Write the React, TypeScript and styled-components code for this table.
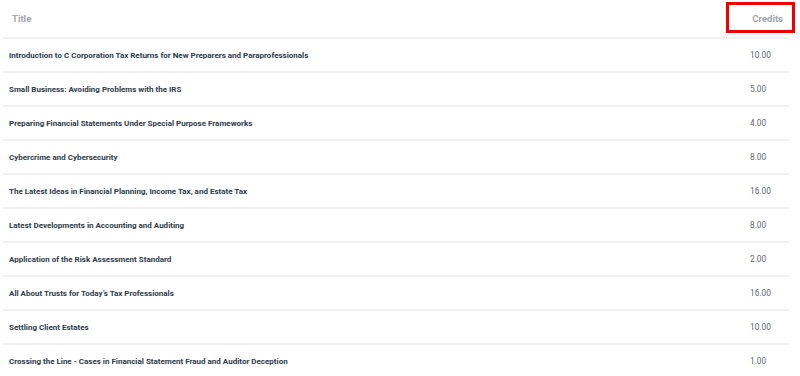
import React from "react";
import styled, { createGlobalStyle } from "styled-components";

const Global = createGlobalStyle`
  html, body { margin: 0; padding: 0; background: #fff; }
  body { font-family: Roboto, "Liberation Sans", Arial, sans-serif; }
`;

const Wrap = styled.div`
  padding: 0 11px 0 3px;
  width: 800px;
  box-sizing: border-box;
`;

const Table = styled.table`
  width: 100%;
  border-collapse: collapse;
  table-layout: fixed;
`;

const HeadCell = styled.th<{ $right?: boolean }>`
  height: 38px;
  padding: 0 6px 0 ${(p) => (p.$right ? "0" : "9px")};
  text-align: ${(p) => (p.$right ? "right" : "left")};
  font-size: 9.5px;
  font-weight: 700;
  color: #a0a4aa;
  vertical-align: middle;
  box-sizing: border-box;
`;

const HeadHighlight = styled.span`
  display: inline-block;
  position: relative;
`;

const RedBox = styled.span`
  position: absolute;
  left: -26px;
  right: -12px;
  top: -11px;
  bottom: -9px;
  border: 3px solid #ee0000;
  pointer-events: none;
`;

const Row = styled.tr`
  border-top: 2px solid #f0f0f0;
`;

const TitleCell = styled.td`
  height: 32px;
  padding: 0 0 0 6px;
  font-size: 8px;
  font-weight: 700;
  color: #2d3a4a;
  vertical-align: middle;
`;

const CreditCell = styled.td`
  padding: 0;
  font-size: 8.3px;
  font-weight: 400;
  color: #62666d;
  vertical-align: middle;
  text-align: left;
`;

const rows: [string, string][] = [
  ["Introduction to C Corporation Tax Returns for New Preparers and Paraprofessionals", "10.00"],
  ["Small Business: Avoiding Problems with the IRS", "5.00"],
  ["Preparing Financial Statements Under Special Purpose Frameworks", "4.00"],
  ["Cybercrime and Cybersecurity", "8.00"],
  ["The Latest Ideas in Financial Planning, Income Tax, and Estate Tax", "16.00"],
  ["Latest Developments in Accounting and Auditing", "8.00"],
  ["Application of the Risk Assessment Standard", "2.00"],
  ["All About Trusts for Today\u2019s Tax Professionals", "16.00"],
  ["Settling Client Estates", "10.00"],
  ["Crossing the Line - Cases in Financial Statement Fraud and Auditor Deception", "1.00"],
];

export default function App() {
  return (
    <>
      <Global />
      <Wrap>
        <Table>
          <colgroup>
            <col />
            <col style={{ width: 39 }} />
          </colgroup>
          <thead>
            <tr>
              <HeadCell>Title</HeadCell>
              <HeadCell $right>
                <HeadHighlight>
                  Credits
                  <RedBox />
                </HeadHighlight>
              </HeadCell>
            </tr>
          </thead>
          <tbody>
            {rows.map(([t, c]) => (
              <Row key={t}>
                <TitleCell>{t}</TitleCell>
                <CreditCell>{c}</CreditCell>
              </Row>
            ))}
          </tbody>
        </Table>
      </Wrap>
    </>
  );
}
